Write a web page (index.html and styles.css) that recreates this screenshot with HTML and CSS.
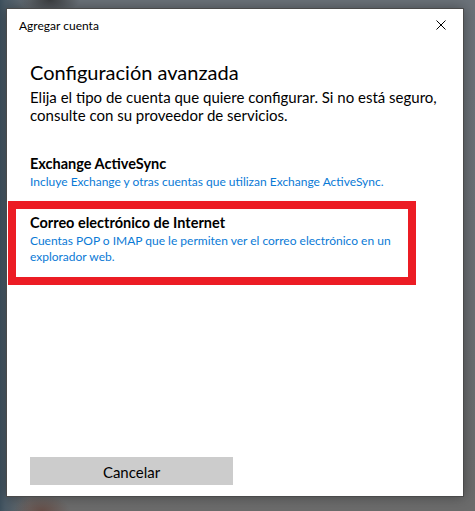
FILE: index.html
```html
<!DOCTYPE html>
<html lang="es">
<head>
<meta charset="utf-8">
<title>Agregar cuenta</title>
<link rel="stylesheet" href="styles.css">
</head>
<body>
<div class="dialog">
  <div class="titlebar">
    <span class="title">Agregar cuenta</span>
    <svg class="close" width="10" height="10" viewBox="0 0 10 10" aria-hidden="true">
      <path d="M0.5 0.5 L9.5 9.5 M9.5 0.5 L0.5 9.5" stroke="#000" stroke-width="1" fill="none"/>
    </svg>
  </div>
  <div class="content">
    <h1 class="heading">Configuración avanzada</h1>
    <p class="intro">Elija el tipo de cuenta que quiere configurar. Si no está seguro, consulte con su proveedor de servicios.</p>
    <div class="option first">
      <div class="opt-title">Exchange ActiveSync</div>
      <div class="opt-desc">Incluye Exchange y otras cuentas que utilizan Exchange ActiveSync.</div>
    </div>
    <div class="option highlighted">
      <div class="opt-title">Correo electrónico de Internet</div>
      <div class="opt-desc">Cuentas POP o IMAP que le permiten ver el correo electrónico en un explorador web.</div>
    </div>
    <button class="cancel">Cancelar</button>
  </div>
</div>
</body>
</html>
```
FILE: styles.css
```css
html, body {
  margin: 0;
  height: 100%;
}
body {
  padding: 8px 0 0 6px;
  box-sizing: border-box;
  font-family: Lato, "Open Sans", sans-serif;
  color: #000;
  background:
    radial-gradient(ellipse 30px 14px at 50px 0px, rgba(40,40,40,0.7), rgba(40,40,40,0) 100%),
    radial-gradient(ellipse 28px 16px at 42px 511px, rgba(100,70,62,0.8), rgba(100,70,62,0) 100%),
    linear-gradient(90deg, #3d4f5c 0px, #4a5a66 5px, rgba(100,106,112,0) 30px),
    linear-gradient(180deg, #6b7279 0%, #6a6e72 60%, #6b6b6b 100%);
  overflow: hidden;
}
.dialog {
  width: 458px;
  height: 489px;
  box-sizing: border-box;
  background: #fff;
  border: 1px solid #4a4a4a;
  box-shadow: 0 0 12px rgba(0,0,0,0.35);
  display: flex;
  flex-direction: column;
}
.titlebar {
  display: flex;
  justify-content: space-between;
  align-items: flex-start;
  padding: 9px 17px 0 12px;
}
.title {
  font-size: 12px;
  line-height: 16px;
}
.close {
  display: block;
  margin-top: 2px;
}
.content {
  flex: 1;
  display: flex;
  flex-direction: column;
  padding: 0 23px 11px 23px;
}
.heading {
  margin: 26px 0 0 0;
  font-size: 20px;
  font-weight: 400;
  line-height: 24px;
}
.intro {
  margin: 4px 0 0 0;
  font-size: 15px;
  line-height: 18px;
}
.option.first {
  margin-top: 31px;
}
.opt-title {
  font-size: 14.5px;
  font-weight: 700;
  line-height: 18px;
}
.opt-desc {
  margin-top: 1px;
  font-size: 12px;
  line-height: 16px;
  color: #0a7ad6;
}
.option.highlighted {
  margin: 11px 0 0 -22px;
  width: 408px;
  box-sizing: border-box;
  border: 8px solid #ec1c24;
  padding: 5px 8px 12px 14px;
}
.cancel {
  margin-top: auto;
  width: 203px;
  height: 28px;
  border: none;
  background: #cccccc;
  font-family: Lato, "Open Sans", sans-serif;
  font-size: 15px;
  color: #000;
  padding: 2px 0 0 0;
}
```
